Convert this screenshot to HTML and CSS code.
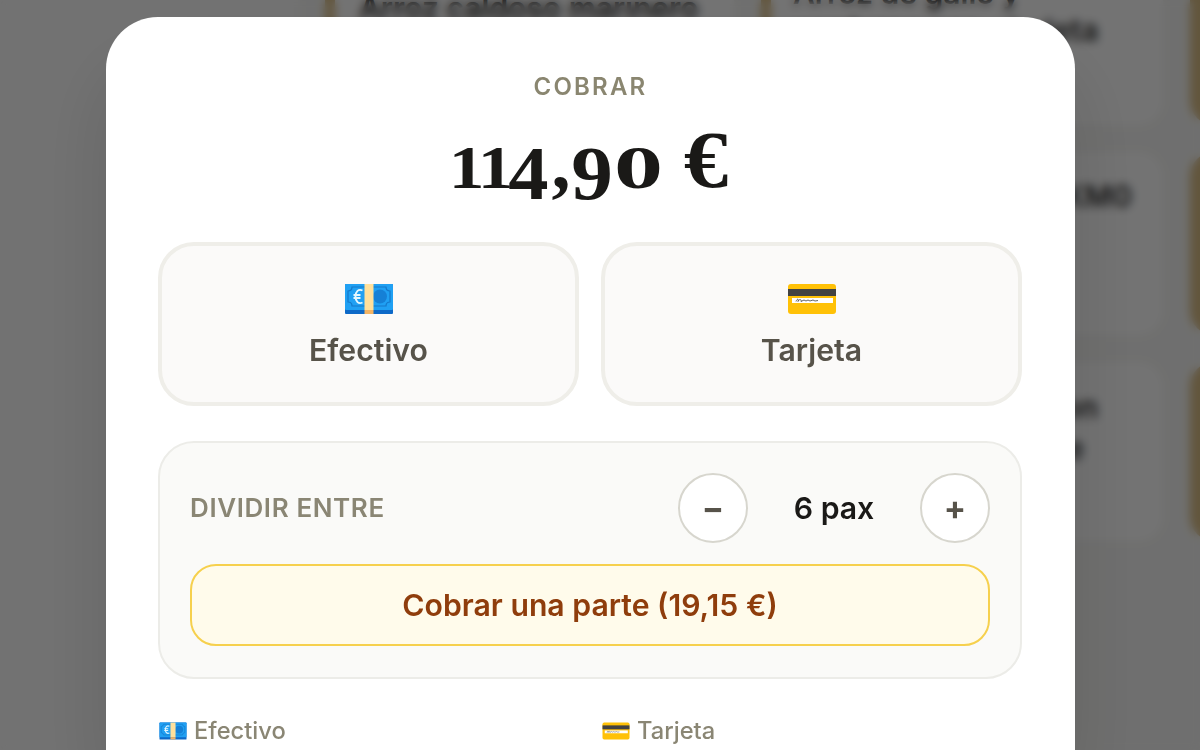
FILE: index.html
```html
<!DOCTYPE html>
<html lang="es">
<head>
	<meta charset="UTF-8">
	<title>Cobrar</title>
	<link rel="stylesheet" href="styles.css">
</head>
<body>

	<svg class="sprite">
		<symbol id="cash" viewBox="0 0 48 32">
			<rect y="1" width="48" height="30" rx="1" fill="#0d69c8"/>
			<rect y="1" width="48" height="26" rx="1" fill="#20a0f3"/>
			<path d="M7 4h34q0 4 4 4v11q-4 0-4 4H7q0-4-4-4V8q4 0 4-4z" fill="none" stroke="#1478ca" stroke-width="1.2"/>
			<circle cx="35" cy="13.500" r="7" fill="#1580d6"/>
			<path d="M17.500 7.500c-4-2-7 1-7 6s3 8 7 6M8.500 12h7M8.500 15h7" fill="none" stroke="#e6f8ff" stroke-width="1.900"/>
			<rect x="19.500" y="1" width="9" height="26" fill="#ffe09c"/>
			<rect x="19.500" y="27" width="9" height="4" fill="#f4b464"/>
		</symbol>
		<symbol id="card" viewBox="0 0 48 32">
			<rect y="1" width="48" height="30" rx="3" fill="#ffc107"/>
			<rect y="6" width="48" height="7" fill="#424242"/>
			<rect x="4" y="15" width="41" height="5" fill="#fff"/>
			<path d="M8 18.500c1-3 3-3 2 0 1-3 4-2 3 0l3-1.500 2 1 2-1 2 1 3-1 2 1 3-.5" fill="none" stroke="#424242" stroke-width=".8"/>
		</symbol>
	</svg>

	<div class="page">
		<div class="sidebar"></div>
		<div class="products">
			<div class="product"><p>Arroz caldoso marinero</p></div>
			<div class="product high"><p>Arroz de gallo y<br>verduras con chuleta</p></div>
			<div class="product"></div>
			<div class="product"></div>
			<div class="product"><p class="end">KM0</p></div>
			<div class="product"></div>
			<div class="product"></div>
			<div class="product"><p class="end two">con<br><span>de</span></p></div>
			<div class="product"></div>
		</div>
	</div>

	<div class="overlay">
		<div class="modal">
			<div class="title">COBRAR</div>
			<div class="amount">
				<span class="one">1</span><span class="one">1</span><span class="four">4</span><span class="comma">,</span><span class="nine">9</span><span class="zero">0</span><span class="euro">€</span>
			</div>
			<div class="methods">
				<button class="method"><svg><use href="#cash"/></svg>Efectivo</button>
				<button class="method"><svg><use href="#card"/></svg>Tarjeta</button>
			</div>
			<div class="split">
				<div class="split-row">
					<span class="split-label">DIVIDIR ENTRE</span>
					<button class="round">−</button>
					<span class="pax">6 pax</span>
					<button class="round">+</button>
				</div>
				<button class="part">Cobrar una parte (19,15 €)</button>
			</div>
			<div class="fields">
				<label><svg><use href="#cash"/></svg>Efectivo</label>
				<label><svg><use href="#card"/></svg>Tarjeta</label>
			</div>
		</div>
	</div>

</body>
</html>
```
FILE: styles.css
```css
* {
	box-sizing: border-box;
	margin: 0;
	padding: 0;
}
html {
	overflow: hidden;
}
body {
	width: 1200px;
	height: 750px;
	overflow: hidden;
	position: relative;
	background: #f9f9f8;
	font-family: Inter, sans-serif;
}
button {
	font-family: inherit;
}
.sprite {
	display: none;
}
.page {
	display: flex;
	width: 1200px;
	height: 750px;
	overflow: hidden;
	background: #f7f7f5;
}
.sidebar {
	flex: none;
	width: 300px;
	background: #fcfcfc;
}
.products {
	display: grid;
	grid-template-columns: 409px 402px 405px;
	grid-template-rows: 185px 183px 179px;
	gap: 27px;
	margin: -60px 0 0 25px;
}
.product {
	background: #fff;
	border-left: 10px solid #d9bd85;
	border-radius: 24px;
	padding: 50px 24px;
	font-size: 30px;
	line-height: 37px;
	font-weight: 600;
	color: #333;
}
.product.high {
	padding-top: 35px;
	padding-left: 22px;
}
.product .end {
	margin-top: -24px;
	padding-right: 7px;
	text-align: right;
}
.product .two {
	margin-top: -25px;
	padding-right: 41px;
	line-height: 41px;
}
.product .two span {
	margin-right: 14px;
}
.overlay {
	position: absolute;
	top: 0;
	left: 0;
	width: 1200px;
	height: 750px;
	overflow: hidden;
	padding: 17px 125px 0 106px;
	background: rgba(0, 0, 0, .55);
	backdrop-filter: blur(5px);
}
.modal {
	height: 733px;
	padding: 56px 53px 0 52px;
	border-radius: 52px 52px 0 0;
	background: #fff;
	box-shadow: 0 50px 80px rgba(0, 0, 0, .13);
}
.title {
	padding-left: 1px;
	text-align: center;
	font-size: 24px;
	line-height: 28px;
	font-weight: 600;
	letter-spacing: 2.2px;
	color: #8a8670;
}
.amount {
	display: flex;
	justify-content: center;
	align-items: baseline;
	height: 126px;
	margin-top: 15px;
	line-height: 90px;
	font-family: "Liberation Serif", serif;
	font-weight: bold;
	color: #1a1917;
}
/* old style figures */
.amount span {
	display: flex;
	justify-content: center;
	font-size: 62px;
}
.amount .one {
	width: 29px;
	transform: translateX(-1px) scaleX(1.15);
}
.amount .four {
	width: 39px;
	font-size: 76px;
	transform: translate(-2px, 11px) scaleX(1.06);
}
.amount .comma {
	width: 23px;
	font-size: 76px;
}
.amount .nine {
	width: 42px;
	font-size: 77px;
	transform: translate(-2px, 11px) scaleX(1.08);
}
.amount .zero {
	width: 47px;
	transform: scaleX(1.58);
}
.amount .euro {
	width: 44px;
	margin-left: 22px;
	font-size: 81px;
	transform: translateY(-1px) scaleX(1.1);
}
.methods {
	display: flex;
	gap: 22px;
}
.method {
	flex: 1;
	display: flex;
	flex-direction: column;
	align-items: center;
	height: 164px;
	padding-top: 37px;
	border: 4px solid #efeee9;
	border-radius: 36px;
	background: #fbfaf9;
	font-size: 30.2px;
	line-height: 40px;
	font-weight: 600;
	color: #57534a;
}
.method svg {
	width: 48px;
	height: 32px;
	margin-bottom: 15px;
}
.split {
	height: 238px;
	margin-top: 35px;
	padding: 30px;
	border: 2px solid #ecece8;
	border-radius: 36px;
	background: #fafaf8;
}
.split-row {
	display: flex;
	align-items: center;
	height: 70px;
}
.split-label {
	flex: 1;
	padding-bottom: 2px;
	font-size: 26px;
	font-weight: 600;
	letter-spacing: .6px;
	color: #8a8674;
}
.round {
	width: 70px;
	height: 70px;
	border: 2px solid #d7d6ce;
	border-radius: 50%;
	background: #fff;
	font-size: 33px;
	font-weight: 700;
	color: #57534a;
}
.pax {
	width: 172px;
	text-align: center;
	font-size: 30.2px;
	font-weight: 600;
	color: #1a1917;
}
.part {
	display: block;
	width: 100%;
	height: 82px;
	margin-top: 21px;
	border: 2px solid #f6d04d;
	border-radius: 26px;
	background: #fffbeb;
	font-size: 30.2px;
	font-weight: 600;
	color: #8f3d0c;
}
.fields {
	display: flex;
	gap: 22px;
	margin-top: 36px;
}
.fields label {
	flex: 1;
	display: flex;
	align-items: center;
	gap: 7px;
	padding-left: 1px;
	font-size: 23.7px;
	line-height: 32px;
	font-weight: 500;
	color: #8a8674;
}
.fields svg {
	width: 28px;
	height: 18px;
}
```
